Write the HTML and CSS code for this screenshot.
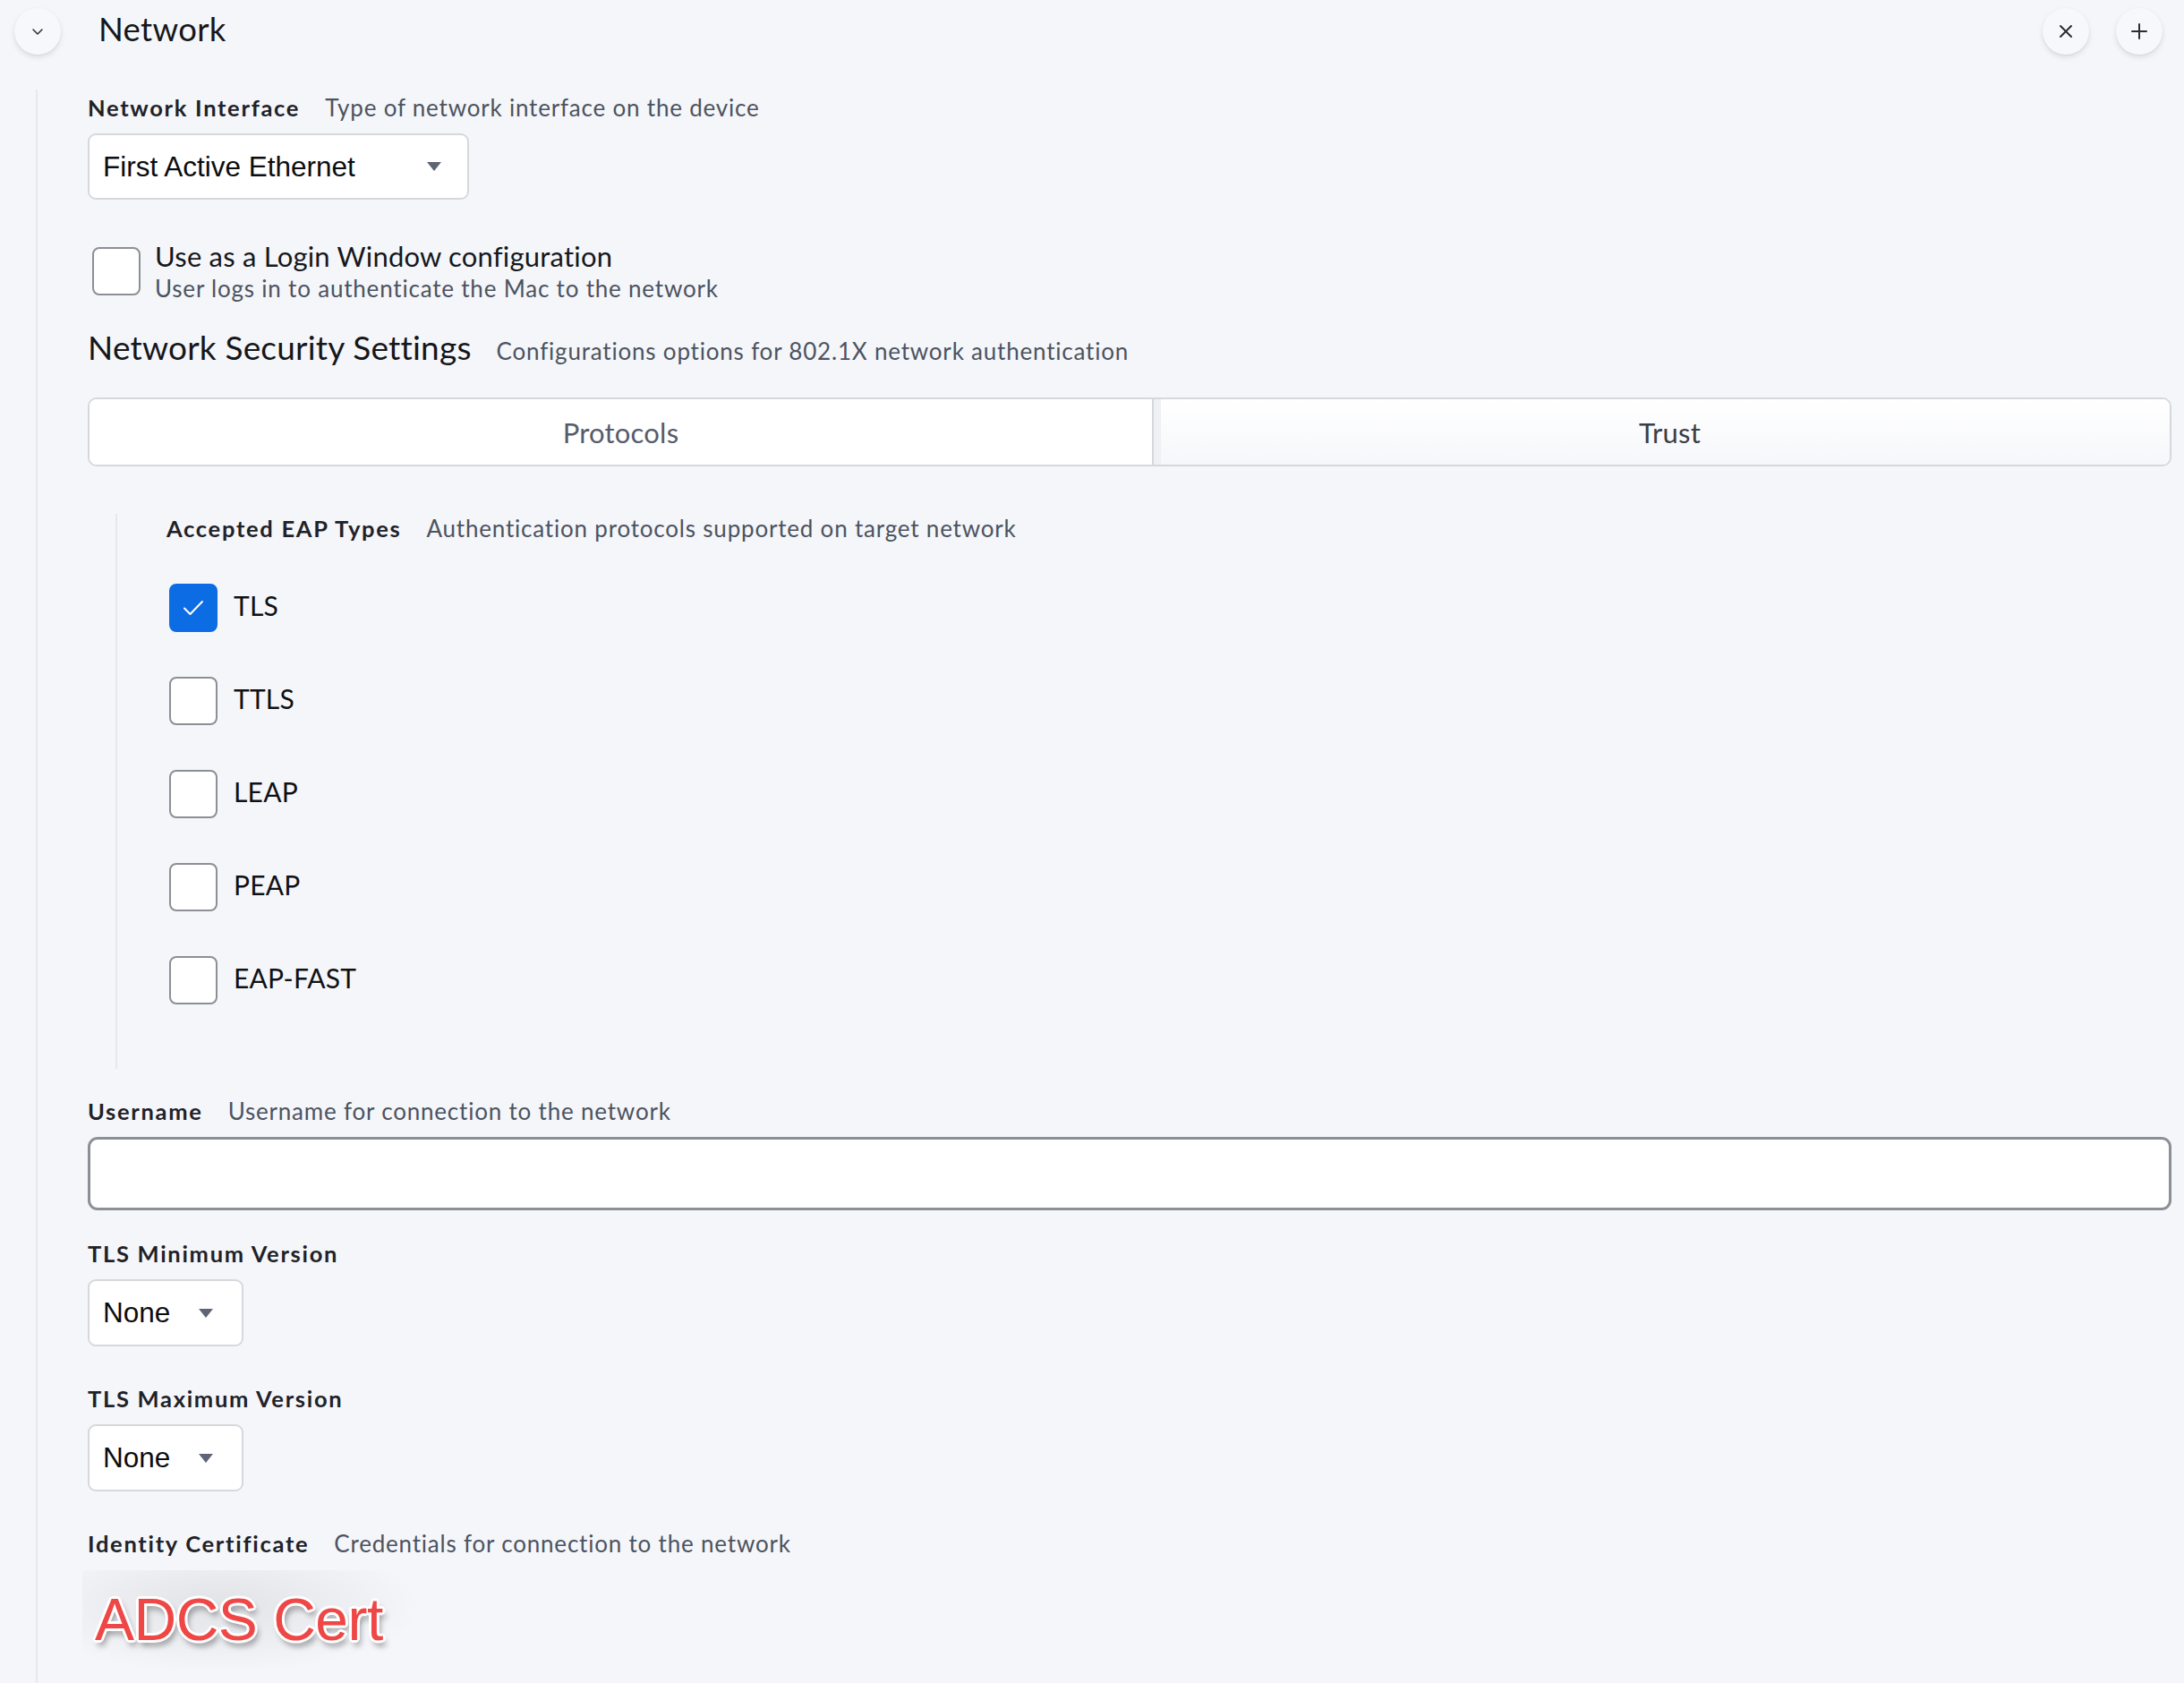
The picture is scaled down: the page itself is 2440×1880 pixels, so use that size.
FILE: index.html
```html
<!DOCTYPE html>
<html>
<head>
<meta charset="utf-8">
<link rel="stylesheet" href="styles.css">
</head>
<body>
<div class="page">
  <header class="head">
    <button class="circle toggle" aria-label="Collapse">
      <svg width="18" height="18" viewBox="0 0 18 18"><path d="M4 7 L9 12 L14 7" fill="none" stroke="#2a2d33" stroke-width="1.5" stroke-linecap="round" stroke-linejoin="round"/></svg>
    </button>
    <h1 class="title">Network</h1>
    <div class="spacer"></div>
    <button class="circle" aria-label="Remove">
      <svg width="18" height="18" viewBox="0 0 18 18"><path d="M3 3 L15 15 M15 3 L3 15" stroke="#2a2d33" stroke-width="2" stroke-linecap="round"/></svg>
    </button>
    <button class="circle" aria-label="Add">
      <svg width="20" height="20" viewBox="0 0 20 20"><path d="M10 2 V18 M2 10 H18" stroke="#2a2d33" stroke-width="2" stroke-linecap="round"/></svg>
    </button>
  </header>

  <main class="main">
    <div class="field-label first"><span class="lbl">Network Interface</span><span class="desc">Type of network interface on the device</span></div>
    <div class="select wide"><span>First Active Ethernet</span><i class="caret"></i></div>

    <div class="login-row">
      <span class="box"></span>
      <div class="login-text">
        <div class="login-title">Use as a Login Window configuration</div>
        <div class="login-sub">User logs in to authenticate the Mac to the network</div>
      </div>
    </div>

    <div class="section-title"><span class="big">Network Security Settings</span><span class="desc">Configurations options for 802.1X network authentication</span></div>

    <div class="tabs">
      <div class="tab active">Protocols</div>
      <div class="tab other">Trust</div>
    </div>

    <div class="inner">
      <div class="field-label"><span class="lbl">Accepted EAP Types</span><span class="desc">Authentication protocols supported on target network</span></div>
      <div class="eap-list">
        <div class="eap"><span class="box checked"><svg width="30" height="30" viewBox="0 0 30 30"><path d="M5 15.5 L11.5 22 L25 8" fill="none" stroke="#fff" stroke-width="2" stroke-linecap="round" stroke-linejoin="round"/></svg></span><span class="eap-name">TLS</span></div>
        <div class="eap"><span class="box"></span><span class="eap-name">TTLS</span></div>
        <div class="eap"><span class="box"></span><span class="eap-name">LEAP</span></div>
        <div class="eap"><span class="box"></span><span class="eap-name">PEAP</span></div>
        <div class="eap"><span class="box"></span><span class="eap-name">EAP-FAST</span></div>
      </div>
    </div>

    <div class="field-label gap-a"><span class="lbl">Username</span><span class="desc">Username for connection to the network</span></div>
    <div class="input"></div>

    <div class="field-label gap-b"><span class="lbl">TLS Minimum Version</span></div>
    <div class="select small"><span>None</span><i class="caret"></i></div>

    <div class="field-label gap-c"><span class="lbl">TLS Maximum Version</span></div>
    <div class="select small"><span>None</span><i class="caret"></i></div>

    <div class="field-label gap-c"><span class="lbl">Identity Certificate</span><span class="desc">Credentials for connection to the network</span></div>
    <div class="cert"><span class="cert-text">ADCS Cert</span></div>
  </main>
</div>
</body>
</html>
```

FILE: styles.css
```css
* { box-sizing: border-box; }
html, body { margin: 0; padding: 0; }
body {
  background: #f5f6fa;
  font-family: Lato, "Open Sans", sans-serif;
  color: #1d2026;
  width: 2440px;
  height: 1880px;
  overflow: hidden;
}
.page { padding: 0 14px 0 16px; }

.head {
  display: flex;
  align-items: center;
  height: 68px;
  padding-top: 2px;
}
.circle {
  width: 52px;
  height: 52px;
  border-radius: 50%;
  border: none;
  background: #f7f8fb;
  box-shadow: 0 3px 6px rgba(0,0,0,0.10), 0 1px 2px rgba(0,0,0,0.05);
  display: flex;
  align-items: center;
  justify-content: center;
  padding: 0;
  margin-left: 30px;
}
.circle.toggle { margin-left: 0; }
.circle:last-child { margin-right: 10px; }
.title {
  margin: 0 0 0 42px;
  font-weight: 400;
  font-size: 36.5px;
  letter-spacing: 0.3px;
  color: #15171b;
  line-height: 44px;
  padding-bottom: 6px;
}
.spacer { flex: 1; }

.main {
  margin-left: 24px;
  margin-top: 32px;
  border-left: 2px solid #e6e8ed;
  padding-left: 56px;
  padding-bottom: 40px;
}

.field-label {
  display: flex;
  align-items: baseline;
  gap: 28px;
  line-height: 32px;
}
.field-label.first { padding-top: 4px; }
.lbl {
  font-weight: 700;
  font-size: 25.5px;
  letter-spacing: 1.7px;
  color: #1f2228;
}
.desc {
  font-size: 26px;
  letter-spacing: 0.8px;
  color: #4c5360;
}

.select {
  margin-top: 13px;
  height: 75px;
  background: #fff;
  border: 2px solid #d6d8dc;
  border-radius: 9px;
  display: flex;
  align-items: center;
  padding-left: 15px;
  font-family: "Liberation Sans", Arial, sans-serif;
  font-size: 31.5px;
  color: #0c0d0f;
}
.select.wide { width: 426px; height: 74px; }
.select.wide span { width: 362px; }
.select.small { width: 174px; }
.select.small span { width: 107px; }
.caret {
  width: 0;
  height: 0;
  border-left: 8px solid transparent;
  border-right: 8px solid transparent;
  border-top: 10px solid #5d6575;
}

.login-row {
  display: flex;
  align-items: flex-start;
  margin-top: 45px;
}
.box {
  width: 54px;
  height: 54px;
  flex: none;
  border: 2px solid #8c8f95;
  border-radius: 8px;
  background: #fff;
  display: flex;
  align-items: center;
  justify-content: center;
}
.login-row .box { margin-top: 8px; margin-left: 5px; }
.login-text { margin-left: 16px; }
.login-title {
  font-size: 31px;
  line-height: 36px;
  letter-spacing: 0.2px;
  color: #16181c;
}
.login-sub {
  font-size: 26px;
  line-height: 32px;
  letter-spacing: 0.8px;
  color: #4c5360;
  margin-top: 2px;
}

.section-title {
  display: flex;
  align-items: baseline;
  gap: 28px;
  margin-top: 28px;
  line-height: 44px;
}
.big {
  font-size: 37px;
  letter-spacing: 0.2px;
  color: #15171b;
}

.tabs {
  margin-top: 30px;
  height: 77px;
  display: flex;
  border: 2px solid #d5d7db;
  border-radius: 10px;
  overflow: hidden;
  background: #fff;
}
.tab {
  display: flex;
  align-items: center;
  justify-content: center;
  font-size: 31px;
  letter-spacing: 0.2px;
}
.tab.active { flex: none; width: 1187px; color: #555c6a; background: #fff; }
.tab.other {
  flex: 1;
  padding-left: 18px;
  color: #3b3f46;
  border-left: 2px solid #d5d7db;
  box-shadow: inset 8px 0 0 #eef0f4;
  background: linear-gradient(#ffffff, #f6f7fa);
}

.inner {
  margin-top: 53px;
  margin-left: 31px;
  border-left: 2px solid #e6e8ed;
  padding-left: 55px;
  padding-bottom: 72px;
}
.eap-list {
  margin-top: 46px;
  display: flex;
  flex-direction: column;
  gap: 50px;
}
.eap {
  display: flex;
  align-items: center;
  height: 54px;
}
.eap .box { margin-left: 3px; }
.box.checked { background: #0b6ce3; border-color: #0b6ce3; }
.eap-name {
  margin-left: 18px;
  font-size: 30px;
  color: #101114;
  margin-top: -6px;
  letter-spacing: 0.2px;
}

.gap-a { margin-top: 31px; }
.gap-b { margin-top: 32px; }
.gap-c { margin-top: 42px; }

.input {
  margin-top: 13px;
  height: 82px;
  background: #fff;
  border: 3px solid #8c8f95;
  border-radius: 11px;
}

.cert {
  margin-top: 14px;
  margin-left: -6px;
  width: 380px;
  height: 110px;
  display: flex;
  align-items: center;
  padding-left: 14px;
  background: radial-gradient(ellipse 60% 70% at 40% 35%, rgba(0,0,0,0.08), rgba(0,0,0,0) 100%);
}
.cert-text {
  font-family: "Liberation Sans", Arial, sans-serif;
  font-size: 66px;
  color: #ef4646;
  letter-spacing: -0.5px;
  text-shadow:
    -3px 0 0 #fff, 3px 0 0 #fff, 0 -3px 0 #fff, 0 3px 0 #fff,
    -2px -2px 0 #fff, 2px -2px 0 #fff, -2px 2px 0 #fff, 2px 2px 0 #fff,
    3px 6px 7px rgba(0,0,0,0.45);
}
```
